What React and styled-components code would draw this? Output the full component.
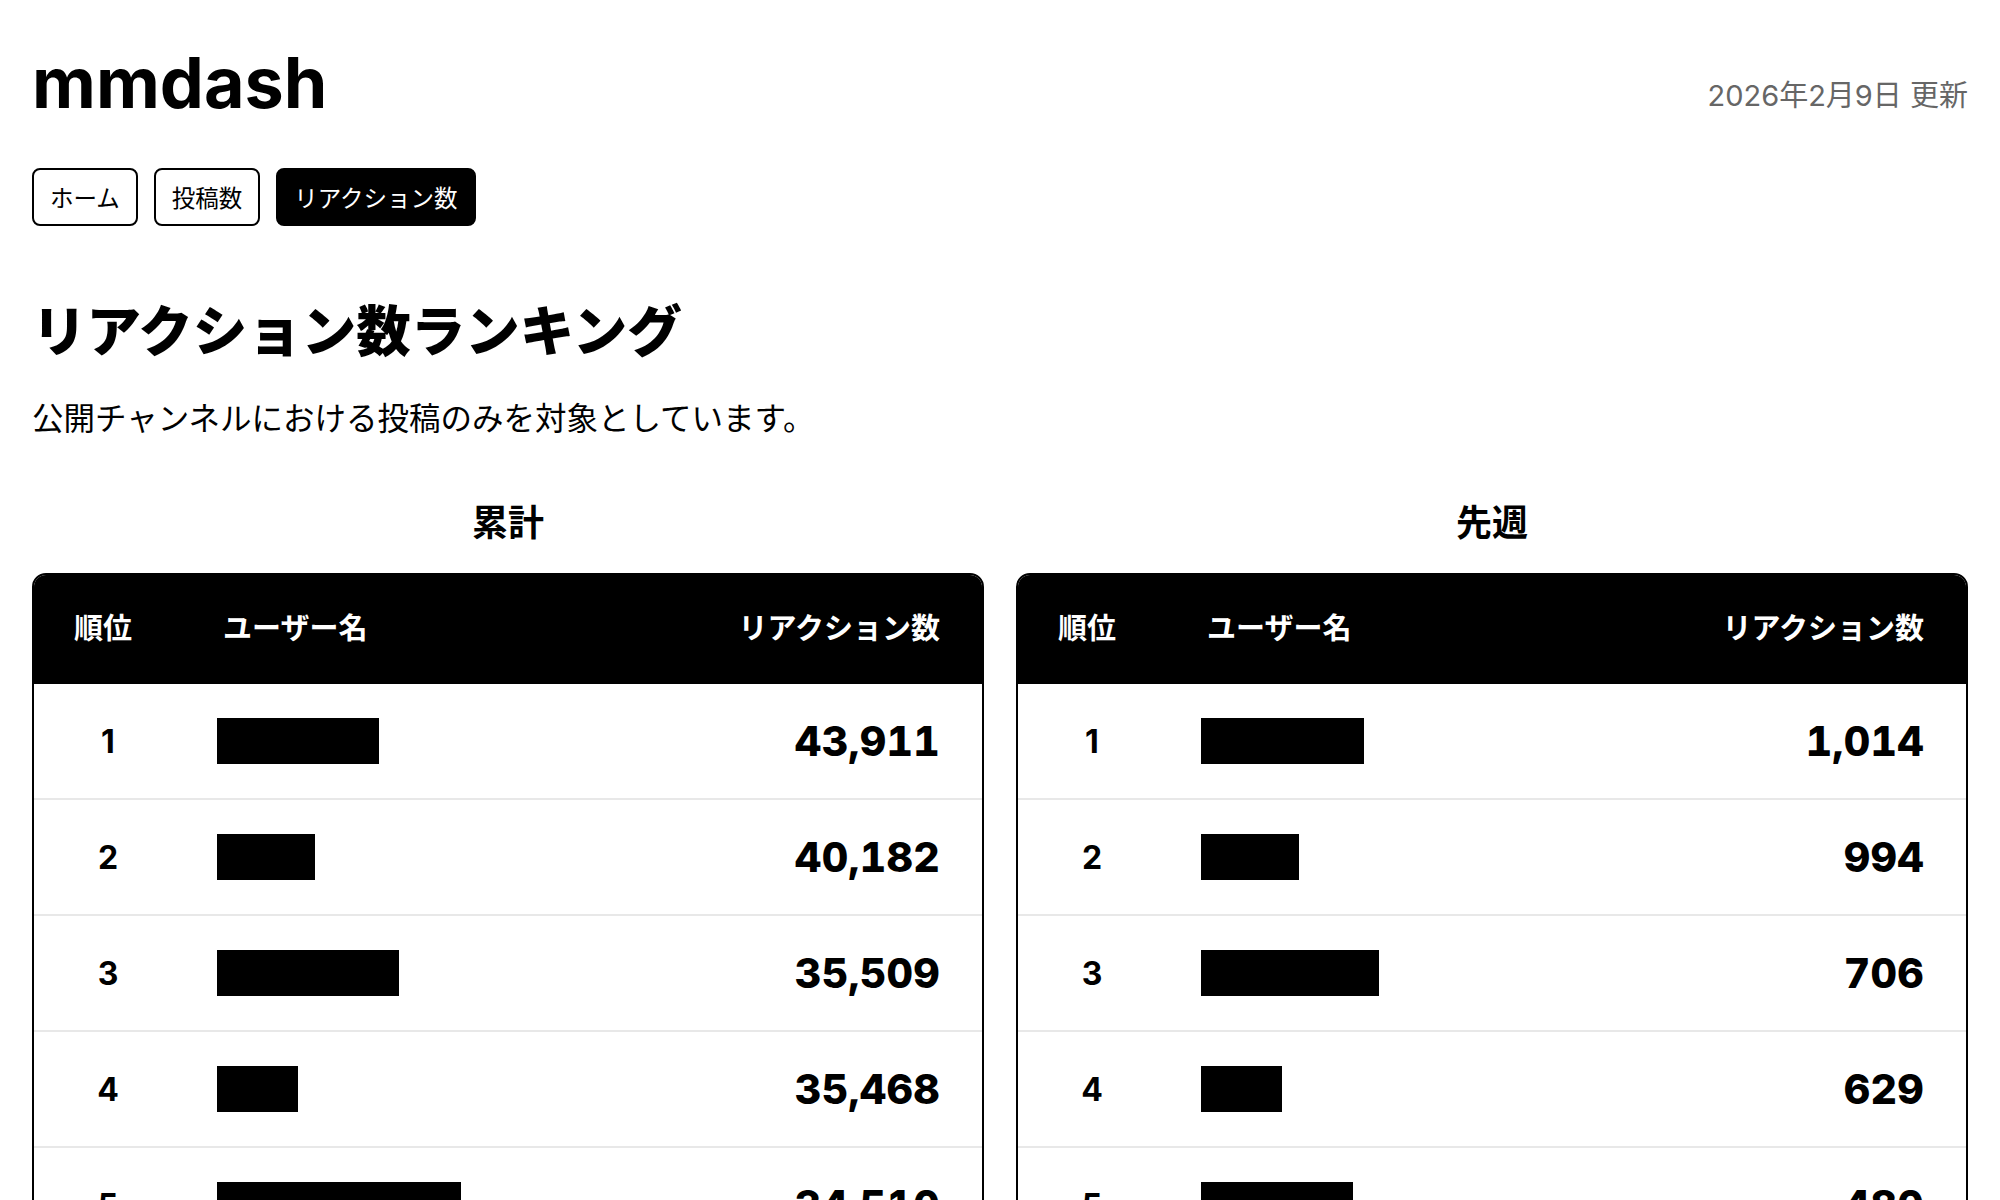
import React from "react";
import styled, { createGlobalStyle } from "styled-components";

const GlobalStyle = createGlobalStyle`
  html, body {
    margin: 0;
    padding: 0;
    overflow: hidden;
    background: #fff;
  }
  body {
    font-family: "Inter", "Noto Sans CJK JP", sans-serif;
    color: #000;
  }
`;

const Page = styled.div`
  padding: 48px 32px 0;
`;

const Header = styled.header`
  display: flex;
  justify-content: space-between;
  align-items: baseline;
`;

const Logo = styled.h1`
  margin: 0;
  font-family: "Inter", sans-serif;
  font-weight: 700;
  font-size: 70px;
  line-height: 70px;
  letter-spacing: 0;
`;

const Updated = styled.span`
  font-family: "Inter", "Noto Sans CJK JP", sans-serif;
  font-size: 29px;
  color: #666;
  position: relative;
  top: -2px;
`;

const Nav = styled.nav`
  display: flex;
  gap: 16px;
  margin-top: 50px;
`;

const NavButton = styled.a`
  box-sizing: border-box;
  height: 58px;
  display: inline-flex;
  align-items: center;
  padding: 0 16px;
  border: 2px solid #000;
  border-radius: 8px;
  font-family: "Noto Sans CJK JP", sans-serif;
  font-size: 23.5px;
  color: ${(p) => (p.$active ? "#fff" : "#000")};
  background: ${(p) => (p.$active ? "#000" : "#fff")};
  text-decoration: none;
`;

const Title = styled.h2`
  margin: 64px 0 0;
  font-family: "Noto Sans CJK JP", sans-serif;
  font-weight: 900;
  font-size: 54.5px;
  line-height: 76px;
`;

const Lead = styled.p`
  margin: 27px 0 0;
  font-family: "Noto Sans CJK JP", sans-serif;
  font-size: 31.5px;
  line-height: 46px;
`;

const Columns = styled.div`
  display: grid;
  grid-template-columns: 1fr 1fr;
  gap: 32px;
  margin-top: 56px;
`;

const Section = styled.section`
  display: flex;
  flex-direction: column;
`;

const SectionTitle = styled.h3`
  margin: 0 0 28px;
  text-align: center;
  font-family: "Noto Sans CJK JP", sans-serif;
  font-weight: 700;
  font-size: 36px;
  line-height: 50px;
`;

const Table = styled.div`
  border: 2px solid #000;
  border-radius: 14px;
  overflow: hidden;
`;

const HeadRow = styled.div`
  display: grid;
  grid-template-columns: 148px 1fr auto;
  align-items: center;
  box-sizing: border-box;
  height: 109px;
  padding-bottom: 8px;
  background: #000;
  color: #fff;
  font-family: "Noto Sans CJK JP", sans-serif;
  font-weight: 700;
  font-size: 29px;
`;

const HeadCell = styled.div`
  padding-left: ${(p) => p.$pl || 0}px;
  padding-right: ${(p) => p.$pr || 0}px;
  text-align: ${(p) => p.$align || "left"};
`;

const Row = styled.div`
  display: grid;
  grid-template-columns: 148px 1fr auto;
  align-items: center;
  box-sizing: border-box;
  height: 116px;
  border-bottom: 2px solid #e8e8e8;
`;

const Rank = styled.div`
  text-align: center;
  font-family: "Inter", sans-serif;
  font-weight: 700;
  font-size: 32px;
`;

const NameCell = styled.div`
  padding-left: 35px;
  display: flex;
  align-items: center;
`;

const Redacted = styled.span`
  display: block;
  height: 46px;
  width: ${(p) => p.$w}px;
  background: #000;
`;

const Value = styled.div`
  padding-right: 42px;
  text-align: right;
  font-family: "Inter", sans-serif;
  font-weight: 800;
  font-size: 41px;
  font-variant-numeric: tabular-nums;
  letter-spacing: 0.3px;
`;

const total = [
  { rank: 1, w: 162, v: "43,911" },
  { rank: 2, w: 98, v: "40,182" },
  { rank: 3, w: 182, v: "35,509" },
  { rank: 4, w: 81, v: "35,468" },
  { rank: 5, w: 244, v: "34,510" },
];

const weekly = [
  { rank: 1, w: 163, v: "1,014" },
  { rank: 2, w: 98, v: "994" },
  { rank: 3, w: 178, v: "706" },
  { rank: 4, w: 81, v: "629" },
  { rank: 5, w: 152, v: "480" },
];

function Ranking({ title, rows }) {
  return (
    <Section>
      <SectionTitle>{title}</SectionTitle>
      <Table>
        <HeadRow>
          <HeadCell $pl={40}>順位</HeadCell>
          <HeadCell $pl={41}>ユーザー名</HeadCell>
          <HeadCell $pr={42} $align="right">
            リアクション数
          </HeadCell>
        </HeadRow>
        {rows.map((r) => (
          <Row key={r.rank}>
            <Rank>{r.rank}</Rank>
            <NameCell>
              <Redacted $w={r.w} />
            </NameCell>
            <Value>{r.v}</Value>
          </Row>
        ))}
      </Table>
    </Section>
  );
}

export default function App() {
  return (
    <>
      <GlobalStyle />
      <Page>
        <Header>
          <Logo>mmdash</Logo>
          <Updated>2026年2月9日 更新</Updated>
        </Header>
        <Nav>
          <NavButton href="#">ホーム</NavButton>
          <NavButton href="#">投稿数</NavButton>
          <NavButton href="#" $active>
            リアクション数
          </NavButton>
        </Nav>
        <Title>リアクション数ランキング</Title>
        <Lead>公開チャンネルにおける投稿のみを対象としています。</Lead>
        <Columns>
          <Ranking title="累計" rows={total} />
          <Ranking title="先週" rows={weekly} />
        </Columns>
      </Page>
    </>
  );
}
